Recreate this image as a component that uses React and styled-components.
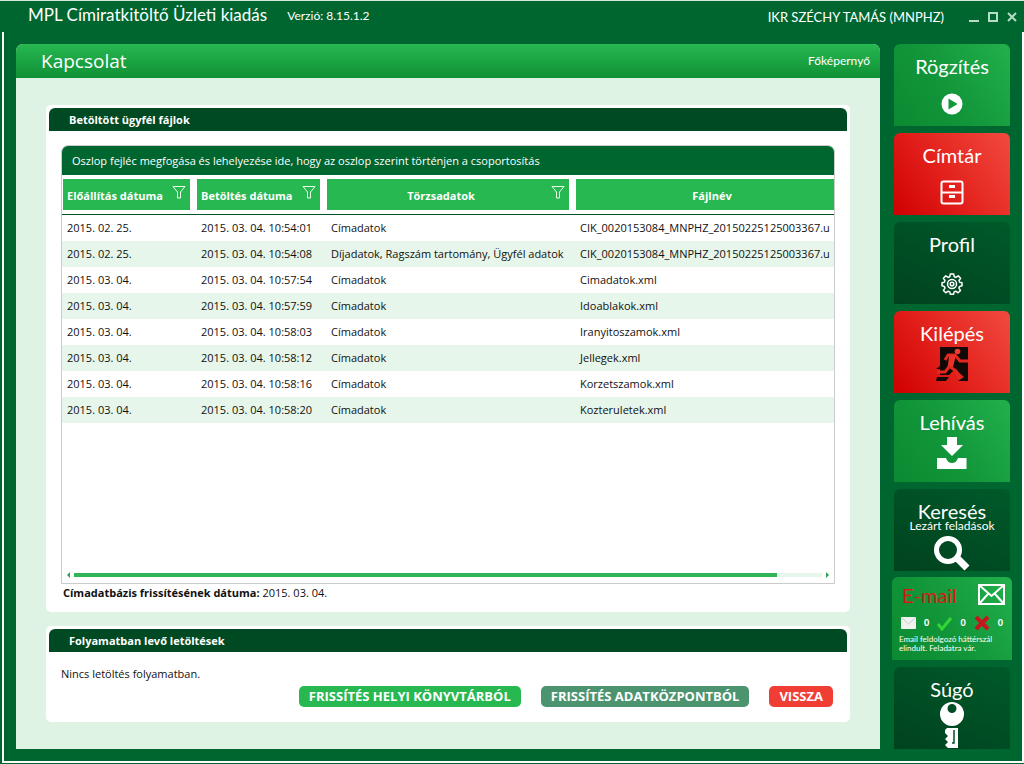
import styled, { createGlobalStyle, css } from "styled-components";

const GlobalStyle = createGlobalStyle`
  * {
    box-sizing: border-box;
  }
  body {
    margin: 0;
    background: #00662f;
    font-family: "Open Sans", "Noto Sans", sans-serif;
    font-size: 11px;
    line-height: 16px;
    color: #111;
  }
  h1, h2, p {
    margin: 0;
    font-weight: 400;
  }
  button {
    font: inherit;
    border: 0;
    padding: 0;
    background: none;
    color: inherit;
    cursor: pointer;
  }
`;

const rounded = `"Lato", sans-serif`;

const Window = styled.div`
  min-height: 100vh;
  display: flex;
  flex-direction: column;
  border-top: 1px solid #d5eadf;
  background: #00662f;
`;

const TitleBar = styled.header`
  height: 31px;
  padding: 0 6px 0 28px;
  display: flex;
  align-items: center;
  color: #fff;
  font-family: ${rounded};
`;

const AppName = styled.h1`
  font-size: 17px;
  line-height: 24px;
  padding-bottom: 4px;
`;

const Version = styled.span`
  margin-left: 20px;
  padding-bottom: 2px;
  font-size: 12px;
`;

const UserName = styled.span`
  margin-left: auto;
  font-size: 13px;
`;

const WindowButtons = styled.div`
  margin-left: 24px;
  display: flex;
  gap: 7px;
  svg {
    display: block;
  }
`;

const Frame = styled.div`
  flex: 1;
  display: flex;
  gap: 12px;
  margin: 0 0 1px 2px;
  padding: 12px 10px 12px 12px;
  border: 2px solid #fff;
  border-top: 0;
`;

const Page = styled.main`
  flex: 1;
  min-width: 0;
  display: flex;
  flex-direction: column;
  border-radius: 7px 7px 0 0;
  background: #dff3e4;
  overflow: hidden;
`;

const PageHeader = styled.header`
  height: 34px;
  padding: 0 10px 0 25px;
  display: flex;
  justify-content: space-between;
  align-items: center;
  background: linear-gradient(#27b851, #0f9035);
  color: #fff;
  h2 {
    font-size: 19px;
    font-weight: 500;
    line-height: 24px;
  }
  a {
    font-family: ${rounded};
    font-size: 12px;
    color: inherit;
    text-decoration: none;
  }
`;

const PageBody = styled.div`
  flex: 1;
  display: flex;
  flex-direction: column;
  gap: 14px;
  padding: 27px 30px;
`;

const Panel = styled.section`
  display: flex;
  flex-direction: column;
  padding: 3px;
  border-radius: 5px;
  background: #fff;
  ${(props) =>
    props.$grow &&
    css`
      flex: 1;
    `}
`;

const PanelTitle = styled.h2`
  height: 23px;
  padding: 0 20px;
  border-radius: 6px 6px 0 0;
  background: #004a23;
  color: #fff;
  font-size: 11px;
  font-weight: 700;
  line-height: 23px;
`;

const PanelBody = styled.div`
  flex: 1;
  display: flex;
  flex-direction: column;
  padding: 14px 12px 8px;
`;

const Grid = styled.div`
  flex: 1;
  display: flex;
  flex-direction: column;
  border: 1px solid #c9cccb;
  border-radius: 7px 7px 0 0;
  overflow: hidden;
`;

const GroupHint = styled.p`
  height: 29px;
  padding: 0 10px;
  background: #00662f;
  color: #fff;
  line-height: 29px;
`;

const TableScroll = styled.div`
  flex: 1;
  overflow: hidden;
`;

const Table = styled.table`
  width: 792px;
  table-layout: fixed;
  border-collapse: collapse;
  th {
    height: 39px;
    padding: 4px 6px 4px 0;
    border-bottom: 1px solid #00522a;
  }
  td {
    height: 26px;
    padding: 0 5px;
    white-space: nowrap;
  }
  tbody tr:nth-child(even) {
    background: #e6f6ea;
  }
`;

const HeadCell = styled.div`
  height: 31px;
  margin-left: 1px;
  padding: 0 4px;
  display: flex;
  align-items: center;
  background: #27b851;
  color: #fff;
  font-weight: 700;
  span {
    flex: 1;
    padding-top: 2px;
    text-align: ${(props) => (props.$center ? "center" : "left")};
  }
  svg {
    margin-bottom: 6px;
  }
`;

const ScrollBar = styled.div`
  height: 17px;
  padding: 0 4px;
  display: flex;
  align-items: center;
  gap: 4px;
`;

const Track = styled.div`
  flex: 1;
  height: 4px;
  background: #e6f6ea;
`;

const Thumb = styled.div`
  width: 94%;
  height: 4px;
  background: #2fb457;
`;

const UpdateDate = styled.p`
  padding: 1px 2px 0;
`;

const Actions = styled.div`
  display: flex;
  justify-content: flex-end;
  gap: 20px;
  margin: 4px 2px;
`;

const buttonColors = {
  green: "#27b851",
  muted: "#4c946f",
  red: "#f03e35",
};

const ActionButton = styled.button`
  && {
    height: 21px;
    padding: 0 10px;
    border-radius: 5px;
    background: ${(props) => buttonColors[props.$color]};
    color: #fff;
    font-size: 13px;
    font-weight: 700;
    line-height: 21px;
  }
`;

const SideBar = styled.nav`
  width: 120px;
  display: flex;
  flex-direction: column;
  gap: 7px;
`;

const tileColors = {
  green: "linear-gradient(55deg, #0b8a31, #12963a 45%, #22b04c)",
  red: "linear-gradient(55deg, #d00000, #e3211c 45%, #f14a40)",
  dark: "linear-gradient(25deg, #00421f, #005a2a)",
};

const Tile = styled.button`
  && {
    height: 82px;
    margin: 0 2px;
    padding-top: 12px;
    display: flex;
    flex-direction: column;
    align-items: center;
    border-radius: 6px 6px 0 0;
    background: ${(props) => tileColors[props.$color]};
    color: #fff;
    font-family: ${rounded};
    font-size: 20px;
    line-height: 20px;
  }
  small {
    font-size: 12px;
    line-height: 10px;
  }
  svg {
    display: block;
    margin-top: ${(props) => props.$iconGap}px;
  }
`;

const MailTile = styled.section`
  height: 83px;
  margin-top: -1px;
  padding: 5px 7px;
  border-radius: 6px 6px 0 0;
  background: ${tileColors.green};
  color: #fff;
  font-family: ${rounded};
  p {
    font-size: 8px;
    line-height: 9px;
  }
`;

const MailTop = styled.div`
  display: flex;
  justify-content: space-between;
  padding: 0 0 0 3px;
  h2 {
    color: #e01510;
    font-size: 20px;
    line-height: 26px;
  }
  svg {
    margin-top: 2px;
  }
`;

const MailCounts = styled.div`
  display: flex;
  align-items: center;
  justify-content: space-between;
  height: 20px;
  margin: 5px 2px 2px;
  font-size: 9px;
  font-weight: 900;
`;

const files = [
  ["2015. 02. 25.", "2015. 03. 04. 10:54:01", "Címadatok", "CIK_0020153084_MNPHZ_20150225125003367.u"],
  ["2015. 02. 25.", "2015. 03. 04. 10:54:08", "Díjadatok, Ragszám tartomány, Ügyfél adatok", "CIK_0020153084_MNPHZ_20150225125003367.u"],
  ["2015. 03. 04.", "2015. 03. 04. 10:57:54", "Címadatok", "Cimadatok.xml"],
  ["2015. 03. 04.", "2015. 03. 04. 10:57:59", "Címadatok", "Idoablakok.xml"],
  ["2015. 03. 04.", "2015. 03. 04. 10:58:03", "Címadatok", "Iranyitoszamok.xml"],
  ["2015. 03. 04.", "2015. 03. 04. 10:58:12", "Címadatok", "Jellegek.xml"],
  ["2015. 03. 04.", "2015. 03. 04. 10:58:16", "Címadatok", "Korzetszamok.xml"],
  ["2015. 03. 04.", "2015. 03. 04. 10:58:20", "Címadatok", "Kozteruletek.xml"],
];

const FilterIcon = () => (
  <svg width="14" height="14" viewBox="0 0 14 14" fill="none" stroke="#e9ffe9">
    <path d="M1 1.5h12L8.5 7v6h-3V7z" />
  </svg>
);

const PlayIcon = () => (
  <svg width="22" height="22" viewBox="0 0 22 22">
    <circle cx="11" cy="11" r="10.5" fill="#fff" />
    <path d="M7.5 5.5v11L16.5 11z" fill="#14963a" />
  </svg>
);

const DrawerIcon = () => (
  <svg width="24" height="25" viewBox="0 0 24 25" fill="none" stroke="#fff" strokeWidth="2">
    <rect x="1.5" y="1.5" width="21" height="22" rx="2" />
    <path d="M1.5 12.5h21" />
    <path d="M9 6.5h6M9 16.5h6" strokeWidth="3" />
  </svg>
);

const GearIcon = () => (
  <svg width="22" height="22" viewBox="0 0 22 22" fill="none" stroke="#fff" strokeWidth="1.5">
    <path
      strokeLinejoin="round"
      d="M9.3 1h3.4l.5 2.7 1.7.7 2.3-1.6 2.4 2.4-1.6 2.3.7 1.7 2.3.5v3.1l-2.4.6-.7 1.7 1.6 2.3-2.4 2.4-2.3-1.6-1.7.7-.5 2.3H9.3l-.5-2.3-1.7-.7-2.3 1.6-2.4-2.4L4 15.1l-.7-1.7L1 12.8V9.7l2.3-.5.7-1.7-1.6-2.3 2.4-2.4 2.3 1.6 1.7-.7z"
    />
    <circle cx="11" cy="11" r="4.5" />
    <circle cx="11" cy="11" r="1.8" />
  </svg>
);

const ExitIcon = () => (
  <svg width="34" height="36" viewBox="0 0 34 36">
    <path d="M5 1h28v34H23l6-4-9-8-6 6H5v-6H1l4-3z" fill="#120805" />
    <path d="M2 31h12l-3 4H1z" fill="#120805" />
    <circle cx="22.5" cy="5.5" r="2.8" fill="#ef3c32" />
    <path
      d="M10 14l3-5h7l5 6h8M19 10l-5 10 7 5 4 8M14 21l-4 5H2"
      fill="none"
      stroke="#e5281f"
      strokeWidth="3"
      strokeLinejoin="round"
    />
    <path d="M14 9h7l-3 12-5-1z" fill="#e9332a" />
  </svg>
);

const DownloadIcon = () => (
  <svg width="30" height="32" viewBox="0 0 30 32" fill="#fff">
    <path d="M10 0h10v8h6L15 19 4 8h6z" />
    <path d="M0 21h9c1 3 3 5 6 5s5-2 6-5h8.5v11H0z" />
  </svg>
);

const SearchIcon = () => (
  <svg width="38" height="35" viewBox="0 0 38 35" fill="none" stroke="#fff">
    <circle cx="15" cy="14" r="11.5" strokeWidth="5" />
    <path d="M24 22l10 10" strokeWidth="7" />
  </svg>
);

const KeyIcon = () => (
  <svg width="26" height="46" viewBox="0 0 26 46" fill="#fff">
    <path
      fillRule="evenodd"
      d="M13 0a12 12 0 1 1 0 24a12 12 0 1 1 0-24zm0 2a4.500 4.500 0 1 0 0 9a4.500 4.500 0 1 0 0-9z"
    />
    <path d="M8 26h11v20H9l-3-3 3-3-3-3 3-3-3-3v-3z" />
    <path d="M15 28v13h-2" fill="none" stroke="#005026" strokeWidth="1.5" />
  </svg>
);

const EnvelopeIcon = () => (
  <svg width="27" height="21" viewBox="0 0 27 21" fill="none" stroke="#fff" strokeWidth="2">
    <path d="M1 1h25v19H1zM1 1l12.500 11L26 1M1 20l9-10M26 20l-9-10" />
  </svg>
);

const SmallMailIcon = () => (
  <svg width="15" height="12" viewBox="0 0 15 12">
    <rect width="15" height="12" rx="1" fill="#f1f1f1" />
    <path d="M1 1l6.500 6L14 1" fill="none" stroke="#c5cdc8" />
  </svg>
);

const CheckIcon = () => (
  <svg width="15" height="15" viewBox="0 0 15 15">
    <path d="M1 8l4 5L14 2" fill="none" stroke="#35d435" strokeWidth="3" />
  </svg>
);

const CrossIcon = () => (
  <svg width="16" height="16" viewBox="0 0 16 16">
    <path d="M2 2l12 12M14 2L2 14" stroke="#c4161c" strokeWidth="4" />
  </svg>
);

const ArrowIcon = ({ flip }) => (
  <svg width="4" height="6" viewBox="0 0 4 6" fill="#2fa257">
    <path d={flip ? "M0 0v6l3-3z" : "M4 0v6L1 3z"} />
  </svg>
);

function WindowControls() {
  return (
    <WindowButtons>
      <button aria-label="Kis méret">
        <svg width="12" height="12" viewBox="0 0 12 12">
          <path d="M1 10h10" stroke="#b5dcc4" strokeWidth="2" />
        </svg>
      </button>
      <button aria-label="Teljes méret">
        <svg width="12" height="12" viewBox="0 0 12 12">
          <path d="M2 2h8v8H2z" fill="none" stroke="#b5dcc4" strokeWidth="2" />
        </svg>
      </button>
      <button aria-label="Bezárás">
        <svg width="12" height="12" viewBox="0 0 12 12">
          <path d="M2 2l8 8M10 2l-8 8" stroke="#b5dcc4" strokeWidth="2" />
        </svg>
      </button>
    </WindowButtons>
  );
}

function FileTable() {
  return (
    <Grid>
      <GroupHint>
        Oszlop fejléc megfogása és lehelyezése ide, hogy az oszlop szerint történjen a csoportosítás
      </GroupHint>
      <TableScroll>
        <Table>
          <colgroup>
            <col width="134" />
            <col width="130" />
            <col width="249" />
            <col />
          </colgroup>
          <thead>
            <tr>
              <th>
                <HeadCell>
                  <span>Előállítás dátuma</span>
                  <FilterIcon />
                </HeadCell>
              </th>
              <th>
                <HeadCell>
                  <span>Betöltés dátuma</span>
                  <FilterIcon />
                </HeadCell>
              </th>
              <th>
                <HeadCell $center>
                  <span>Törzsadatok</span>
                  <FilterIcon />
                </HeadCell>
              </th>
              <th>
                <HeadCell $center>
                  <span>Fájlnév</span>
                </HeadCell>
              </th>
            </tr>
          </thead>
          <tbody>
            {files.map((row) => (
              <tr key={row[1]}>
                {row.map((cell, i) => (
                  <td key={i}>{cell}</td>
                ))}
              </tr>
            ))}
          </tbody>
        </Table>
      </TableScroll>
      <ScrollBar>
        <ArrowIcon />
        <Track>
          <Thumb />
        </Track>
        <ArrowIcon flip />
      </ScrollBar>
    </Grid>
  );
}

function MailStatus() {
  return (
    <MailTile>
      <MailTop>
        <h2>E-mail</h2>
        <EnvelopeIcon />
      </MailTop>
      <MailCounts>
        <SmallMailIcon />
        <span>0</span>
        <CheckIcon />
        <span>0</span>
        <CrossIcon />
        <span>0</span>
      </MailCounts>
      <p>Email feldolgozó háttérszál elindult. Feladatra vár.</p>
    </MailTile>
  );
}

export default function App() {
  return (
    <Window>
      <GlobalStyle />
      <TitleBar>
        <AppName>MPL Címiratkitöltő Üzleti kiadás</AppName>
        <Version>Verzió: 8.15.1.2</Version>
        <UserName>IKR SZÉCHY TAMÁS (MNPHZ)</UserName>
        <WindowControls />
      </TitleBar>
      <Frame>
        <Page>
          <PageHeader>
            <h2>Kapcsolat</h2>
            <a href="#home">Főképernyő</a>
          </PageHeader>
          <PageBody>
            <Panel $grow>
              <PanelTitle>Betöltött ügyfél fájlok</PanelTitle>
              <PanelBody>
                <FileTable />
                <UpdateDate>
                  <b>Címadatbázis frissítésének dátuma:</b> 2015. 03. 04.
                </UpdateDate>
              </PanelBody>
            </Panel>
            <Panel>
              <PanelTitle>Folyamatban levő letöltések</PanelTitle>
              <PanelBody>
                <p>Nincs letöltés folyamatban.</p>
                <Actions>
                  <ActionButton $color="green">FRISSÍTÉS HELYI KÖNYVTÁRBÓL</ActionButton>
                  <ActionButton $color="muted">FRISSÍTÉS ADATKÖZPONTBÓL</ActionButton>
                  <ActionButton $color="red">VISSZA</ActionButton>
                </Actions>
              </PanelBody>
            </Panel>
          </PageBody>
        </Page>
        <SideBar>
          <Tile $color="green" $iconGap={17}>
            Rögzítés
            <PlayIcon />
          </Tile>
          <Tile $color="red" $iconGap={15}>
            Címtár
            <DrawerIcon />
          </Tile>
          <Tile $color="dark" $iconGap={19}>
            Profil
            <GearIcon />
          </Tile>
          <Tile $color="red" $iconGap={3}>
            Kilépés
            <ExitIcon />
          </Tile>
          <Tile $color="green" $iconGap={5}>
            Lehívás
            <DownloadIcon />
          </Tile>
          <Tile $color="dark" $iconGap={5}>
            Keresés
            <small>Lezárt feladások</small>
            <SearchIcon />
          </Tile>
          <MailStatus />
          <Tile $color="dark" $iconGap={3}>
            Súgó
            <KeyIcon />
          </Tile>
        </SideBar>
      </Frame>
    </Window>
  );
}
